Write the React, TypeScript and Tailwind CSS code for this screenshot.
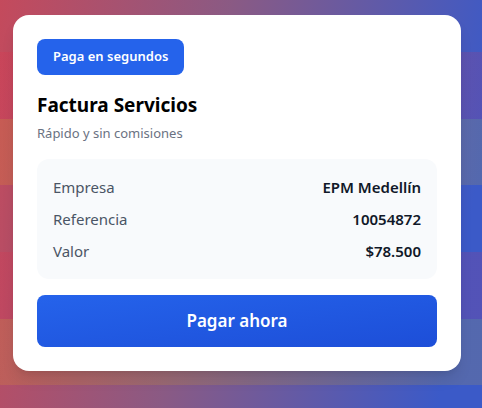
import React from 'react';

const rows = [
  { label: 'Empresa', value: 'EPM Medellín' },
  { label: 'Referencia', value: '10054872' },
  { label: 'Valor', value: '$78.500' },
];

const App = () => {
  return (
    <div className="min-h-[408px] w-full bg-[repeating-linear-gradient(to_bottom,transparent_0px,transparent_52px,rgba(255,30,60,0.12)_52px,rgba(255,30,60,0.12)_118.7px,rgba(255,200,0,0.13)_118.7px,rgba(255,200,0,0.13)_185.4px,transparent_185.4px,transparent_200px),linear-gradient(100deg,#c44a5c_0%,#8a5a84_42%,#3b5ac8_92%)] pl-[13px] pt-[15px] font-['Noto_Sans',sans-serif]">
      <div className="w-[448px] rounded-2xl bg-white p-6 shadow-lg">
        <span className="inline-flex h-9 items-center rounded-lg bg-[#2563eb] px-4 text-[13px] font-semibold text-white">
          Paga en segundos
        </span>
        <h1 className="mt-4 text-[19px] font-bold leading-7 text-black">Factura Servicios</h1>
        <p className="mt-1 text-[13px] leading-5 text-gray-500">Rápido y sin comisiones</p>

        <div className="mt-4 flex flex-col gap-2 rounded-xl bg-slate-50 px-4 py-4">
          {rows.map((r) => (
            <div key={r.label} className="flex h-6 items-center justify-between text-[15px]">
              <span className="text-gray-600">{r.label}</span>
              <span className="font-semibold text-gray-900">{r.value}</span>
            </div>
          ))}
        </div>

        <button className="mt-4 flex h-[52px] w-full items-center justify-center rounded-lg bg-gradient-to-br from-[#2563eb] to-[#1d4ed8] text-[17px] font-semibold text-white">
          Pagar ahora
        </button>
      </div>
    </div>
  );
};

export default App;
